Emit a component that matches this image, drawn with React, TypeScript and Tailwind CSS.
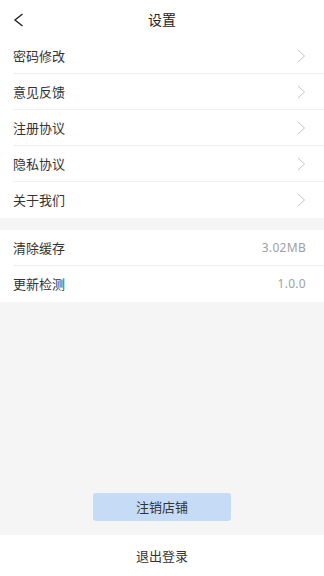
import React from 'react'

const links = ['密码修改', '意见反馈', '注册协议', '隐私协议', '关于我们']
const infos = [
  { label: '清除缓存', value: '3.02MB' },
  { label: '更新检测', value: '1.0.0' },
]

function Chevron() {
  return (
    <svg width="9" height="14" viewBox="0 0 9 14" fill="none" className="shrink-0">
      <path d="M1 1l6.5 6L1 13" stroke="#c4c4c4" strokeWidth="1" />
    </svg>
  )
}

export default function App() {
  return (
    <div
      className="w-[324px] h-[576px] flex flex-col bg-[#f5f5f5] text-[#333]"
      style={{ fontFamily: '"Noto Sans CJK SC", "Noto Sans", sans-serif' }}
    >
      {/* Header */}
      <div className="relative h-[38px] bg-white flex items-center justify-center shrink-0">
        <svg width="12" height="14" viewBox="0 0 12 14" fill="none" className="absolute left-[13px] top-[13px]">
          <path d="M9.5 1L2 7l7.5 6" stroke="#222" strokeWidth="1.4" />
        </svg>
        <span className="text-[14px] text-[#222]">设置</span>
      </div>

      {/* Group 1 */}
      <div className="bg-white pl-[13px] shrink-0">
        {links.map((l, i) => (
          <div
            key={l}
            className={`h-[36px] flex items-center justify-between pr-[18px] ${
              i < links.length - 1 ? 'border-b border-[#eeeeee]' : ''
            }`}
          >
            <span className="text-[13px]">{l}</span>
            <Chevron />
          </div>
        ))}
      </div>

      {/* Group 2 */}
      <div className="bg-white pl-[13px] mt-[12px] shrink-0">
        {infos.map((r, i) => (
          <div
            key={r.label}
            className={`h-[36px] flex items-center justify-between pr-[18px] ${
              i < infos.length - 1 ? 'border-b border-[#eeeeee]' : ''
            }`}
          >
            <span className="text-[13px]">{r.label}</span>
            <span
              className="text-[12px] text-[#a0a0a0] tracking-[0.3px]"
              style={{ fontFamily: '"Noto Sans", sans-serif' }}
            >
              {r.value}
            </span>
          </div>
        ))}
      </div>

      <div className="flex-1 flex flex-col justify-end items-center pb-[14px]">
        <button className="w-[138px] h-[28px] rounded-[3px] bg-[#c6dbf6] text-[13px] text-[#333]">
          注销店铺
        </button>
      </div>

      <div className="h-[41px] bg-white flex items-center justify-center shrink-0">
        <span className="text-[13px]">退出登录</span>
      </div>
    </div>
  )
}
